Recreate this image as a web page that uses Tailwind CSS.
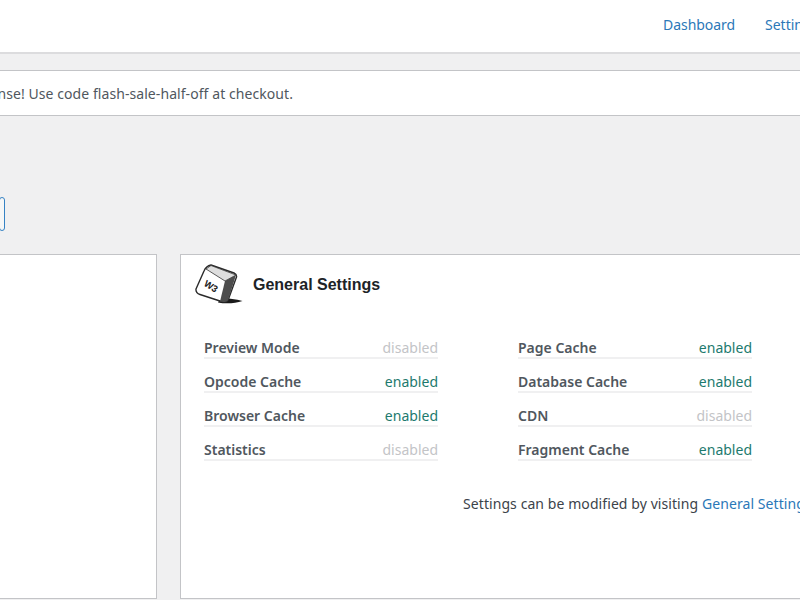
<!DOCTYPE html>
<html>
<head>
<meta charset="utf-8">
<script src="https://cdn.jsdelivr.net/npm/@tailwindcss/browser@4"></script>
</head>
<body class="bg-[#f0f0f1]">
<div class="w-[800px] h-[600px] overflow-hidden bg-[#f0f0f1] font-['Noto_Sans',sans-serif] text-[14px] text-[#3c434a]">
  <header class="h-[54px] bg-white border-b-2 border-[#dcdcde] flex items-center pl-[663px] pb-[4px] gap-[30px] whitespace-nowrap text-[#2b78b8]">
    <a class="tracking-[-0.05px]">Dashboard</a><a>Settings</a>
  </header>
  <div class="mt-[16px] h-[46px] bg-white border-y border-[#c3c4c7] flex items-center justify-end w-[800px]">
    <div class="w-[800px] flex justify-end pr-[507px] whitespace-nowrap tracking-[0.07px] text-[#50575e]"><span>Purchase a license! Use code flash-sale-half-off at checkout.</span></div>
  </div>
  <div class="mt-[81px] h-[34px] w-[6px] ml-[-1px] border border-[#3582c4] rounded-[3px] bg-[#f6f7f7]"></div>
  <div class="mt-[23px] flex gap-[23px] ml-[4px]">
    <section class="h-[345px] ml-[-15px] w-[168px] shrink-0 bg-white border border-[#c3c4c7]"></section>
    <section class="w-[700px] shrink-0 h-[345px] bg-white border border-[#c3c4c7] pl-[14px] pt-[9px]">
      <div class="flex items-center gap-[10px] h-[42px]">
        <svg class="w-[48px] h-[42px] shrink-0" viewBox="0 0 48 42">
          <path d="M26 33 C34 35 41 35 47.500 37 C40 39.500 31 40 23 38.500 Z" fill="#1a1a1a"/>
          <path d="M1 25 L9 7 Q11 2 16 1 L39 9 Q42 10.500 41.500 13 L33.500 35 Q32.500 38.500 28 38 L5 30.500 Q0.500 29 1 25 Z" fill="#ffffff" stroke="#2a2a2a" stroke-width="1.400" stroke-linejoin="round"/>
          <path d="M41 11 L30 17 L25 37.500 L29 38 Q32.500 38 33.500 35 Z" fill="#4d4d4d"/>
          <path d="M11 5 L30 17 L41 11 L16 1.500 Z" fill="#dedede" stroke="#333333" stroke-width="0.800" stroke-linejoin="round"/>
          <text x="9" y="25.500" transform="rotate(32 16 22)" font-family="'Liberation Sans',sans-serif" font-size="9.500" font-weight="700" fill="#222222">W3</text>
        </svg>
        <h2 class="font-['Liberation_Sans',sans-serif] font-bold text-[16px] text-[#1d2327] -mt-[1px]">General Settings</h2>
      </div>
      <div class="ml-[9px] mt-[28px] grid grid-cols-[234px_234px] gap-x-[80px] gap-y-[9px] text-[#50575e]">
        <div class="h-[25px] flex justify-between items-end border-b-2 border-[#f0f0f1] leading-[18px]"><span class="font-semibold">Preview Mode</span><span class="text-[#c3c4c7]">disabled</span></div>
        <div class="h-[25px] flex justify-between items-end border-b-2 border-[#f0f0f1] leading-[18px]"><span class="font-semibold">Page Cache</span><span class="text-[#1d7a6e]">enabled</span></div>
        <div class="h-[25px] flex justify-between items-end border-b-2 border-[#f0f0f1] leading-[18px]"><span class="font-semibold">Opcode Cache</span><span class="text-[#1d7a6e]">enabled</span></div>
        <div class="h-[25px] flex justify-between items-end border-b-2 border-[#f0f0f1] leading-[18px]"><span class="font-semibold">Database Cache</span><span class="text-[#1d7a6e]">enabled</span></div>
        <div class="h-[25px] flex justify-between items-end border-b-2 border-[#f0f0f1] leading-[18px]"><span class="font-semibold">Browser Cache</span><span class="text-[#1d7a6e]">enabled</span></div>
        <div class="h-[25px] flex justify-between items-end border-b-2 border-[#f0f0f1] leading-[18px]"><span class="font-semibold">CDN</span><span class="text-[#c3c4c7]">disabled</span></div>
        <div class="h-[25px] flex justify-between items-end border-b-2 border-[#f0f0f1] leading-[18px]"><span class="font-semibold">Statistics</span><span class="text-[#c3c4c7]">disabled</span></div>
        <div class="h-[25px] flex justify-between items-end border-b-2 border-[#f0f0f1] leading-[18px]"><span class="font-semibold">Fragment Cache</span><span class="text-[#1d7a6e]">enabled</span></div>
      </div>
      <p class="mt-[31px] ml-[268px] whitespace-nowrap leading-[24px] tracking-[0.08px]">Settings can be modified by visiting <a class="text-[#2b78b8]">General Settings</a></p>
    </section>
  </div>
</div>
</body>
</html>
